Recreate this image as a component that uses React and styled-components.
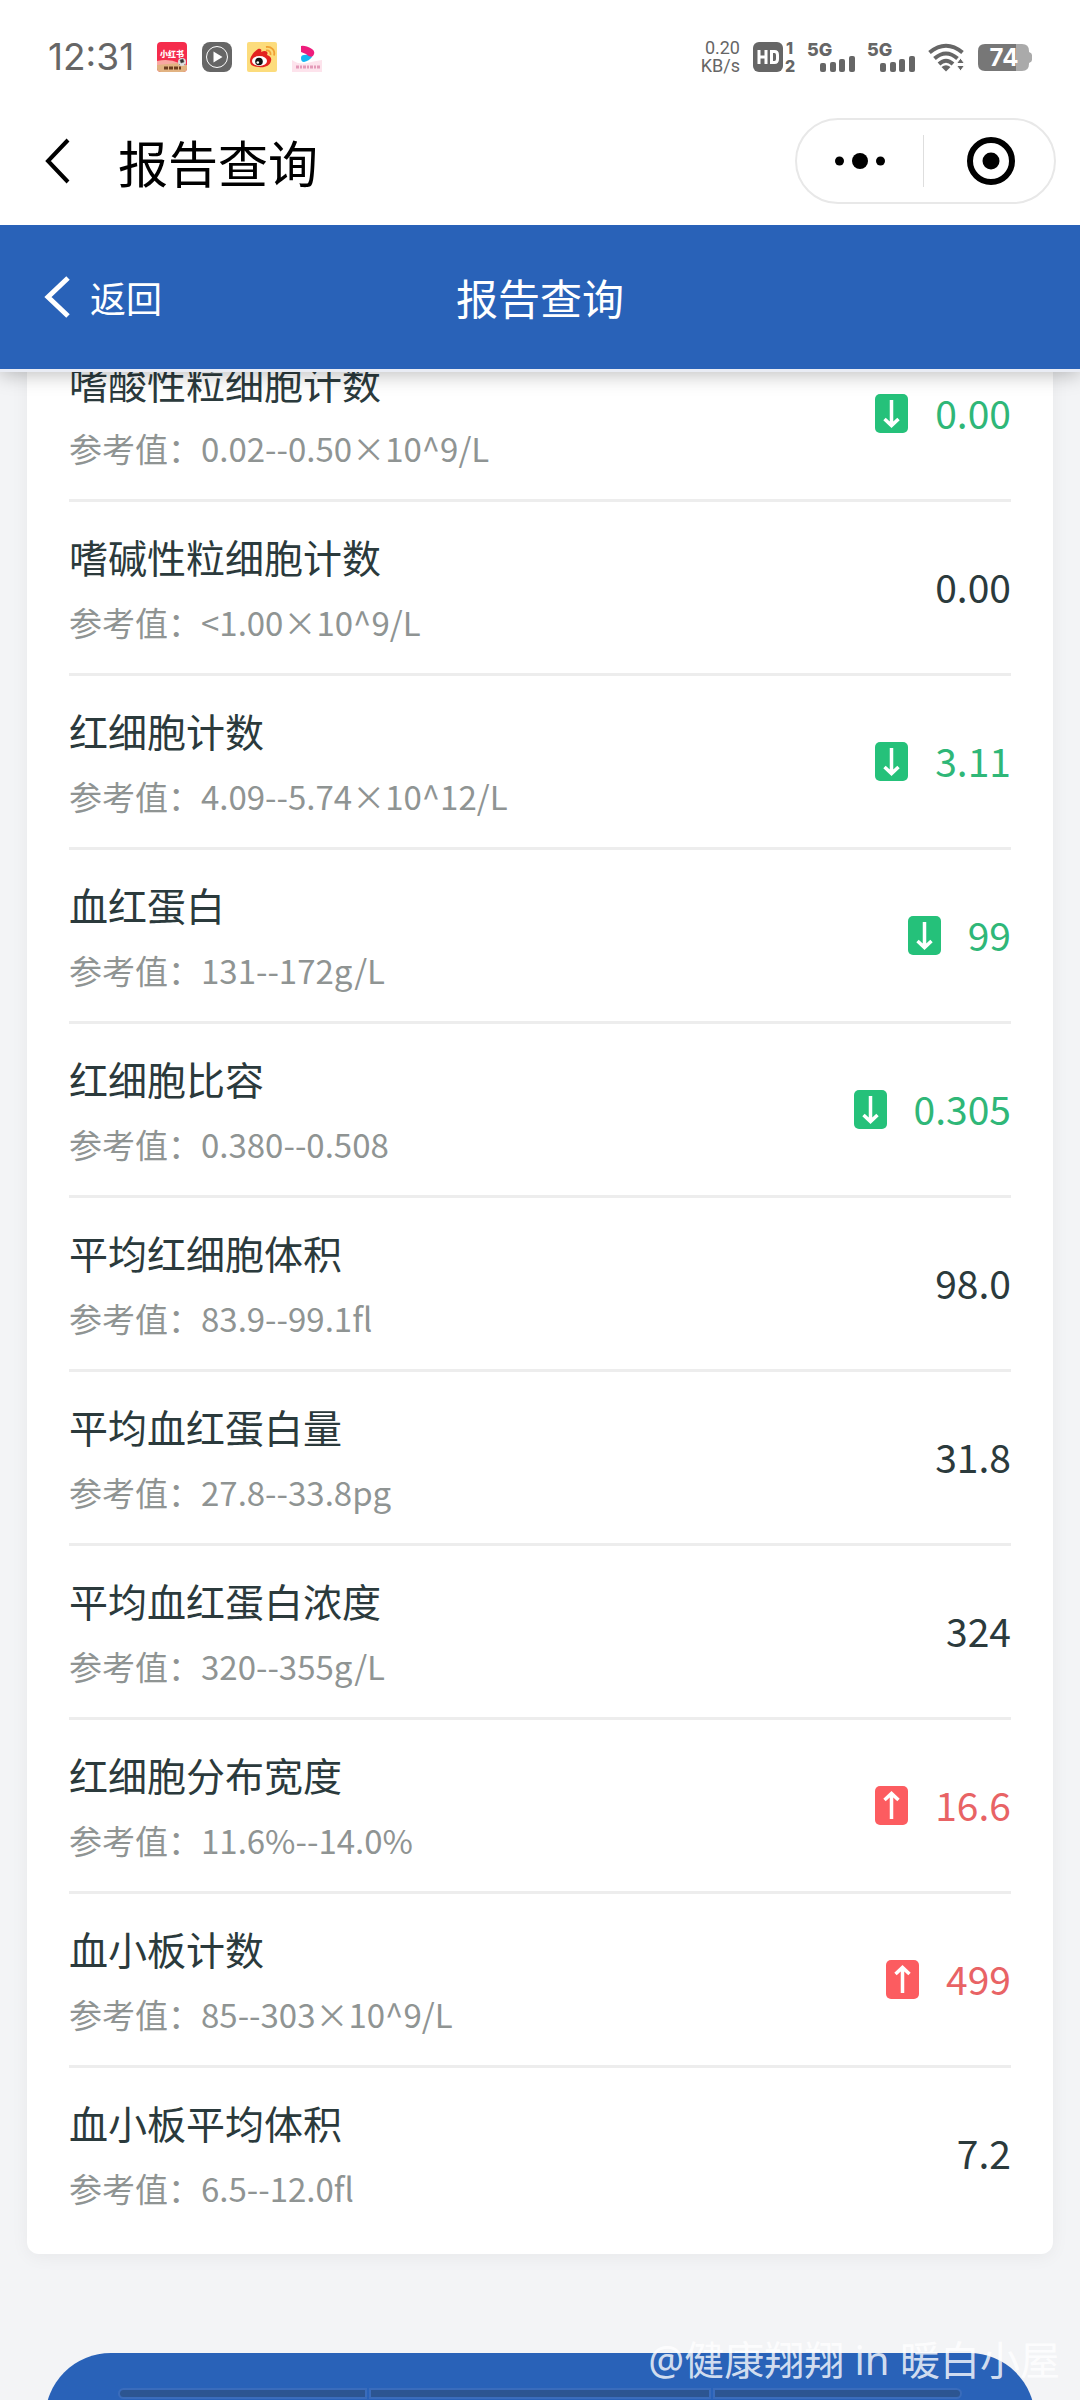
import React, { useLayoutEffect, useRef } from 'react'
import styled, { createGlobalStyle, css } from 'styled-components'

const colors = {
  primary: '#2962b8',
  page: '#f3f4f6',
  text: '#2b3a3c',
  muted: '#8f9493',
  line: '#ededed',
  status: '#666666',
  low: '#2fb778',
  lowIcon: '#25c17a',
  high: '#e86365',
  highIcon: '#fc5c60',
}

const results = [
  { name: '嗜酸性粒细胞计数', range: '0.02--0.50×10^9/L', value: '0.00', flag: 'low' },
  { name: '嗜碱性粒细胞计数', range: '<1.00×10^9/L', value: '0.00' },
  { name: '红细胞计数', range: '4.09--5.74×10^12/L', value: '3.11', flag: 'low' },
  { name: '血红蛋白', range: '131--172g/L', value: '99', flag: 'low' },
  { name: '红细胞比容', range: '0.380--0.508', value: '0.305', flag: 'low' },
  { name: '平均红细胞体积', range: '83.9--99.1fl', value: '98.0' },
  { name: '平均血红蛋白量', range: '27.8--33.8pg', value: '31.8' },
  { name: '平均血红蛋白浓度', range: '320--355g/L', value: '324' },
  { name: '红细胞分布宽度', range: '11.6%--14.0%', value: '16.6', flag: 'high' },
  { name: '血小板计数', range: '85--303×10^9/L', value: '499', flag: 'high' },
  { name: '血小板平均体积', range: '6.5--12.0fl', value: '7.2' },
]

const GlobalStyle = createGlobalStyle`
  * {
    box-sizing: border-box;
  }

  body {
    margin: 0;
    background: ${colors.page};
    font-family: 'Noto Sans CJK SC', sans-serif;
  }

  button {
    margin: 0;
    padding: 0;
    border: 0;
    background: none;
    color: inherit;
    font: inherit;
  }

  svg {
    display: block;
    flex: none;
    overflow: visible;
  }
`

const Screen = styled('div')`
  position: relative;
  display: flex;
  flex-direction: column;
  height: 100vh;
  overflow: hidden;
`

const StatusBar = styled('div')`
  display: flex;
  justify-content: space-between;
  align-items: center;
  padding: 17px 48px 0;
  height: 97px;
  background: #fff;
  color: ${colors.status};
`

const StatusGroup = styled('div')`
  display: flex;
  align-items: center;
  gap: ${p => p.$gap}px;
`

const Clock = styled('time')`
  margin-right: 8px;
  font: 400 37px/40px Inter, sans-serif;
`

const Speed = styled('div')`
  display: flex;
  flex-direction: column;
  align-items: flex-end;
  font: 400 18px/18px Roboto, sans-serif;
`

const TitleBar = styled('header')`
  position: relative;
  z-index: 2;
  display: flex;
  align-items: center;
  padding: 0 24px 0 45px;
  height: 128px;
  background: #fff;
  color: #000;
`

const PageTitle = styled('h1')`
  flex: 1;
  margin: 0 0 0 48px;
  font-size: 50px;
  font-weight: 400;
  line-height: 72px;
`

const Capsule = styled('div')`
  display: flex;
  align-items: center;
  width: 261px;
  height: 86px;
  border: 2px solid #e8e8e8;
  border-radius: 43px;
`

const CapsuleButton = styled('button')`
  display: flex;
  flex: 1;
  justify-content: center;
  align-items: center;
  height: 52px;

  & + & {
    padding-left: 4px;
    border-left: 1px solid #dedede;
  }
`

const NavBar = styled('nav')`
  position: relative;
  z-index: 1;
  display: grid;
  grid-template-columns: 1fr auto 1fr;
  align-items: center;
  padding: 0 45px;
  height: 147px;
  border-bottom: 3px solid #e9ecf4;
  background: ${colors.primary};
  box-shadow: 0 3px 18px rgba(0, 0, 0, 0.25);
  color: #fff;
`

const BackButton = styled('button')`
  display: flex;
  align-items: center;
  gap: 20px;
  font-size: 36px;
  line-height: 54px;
`

const NavTitle = styled('h2')`
  margin: 0;
  font-size: 42px;
  font-weight: 400;
  line-height: 60px;
`

const Content = styled('main')`
  flex: 1;
  min-height: 0;
  padding: 0 27px 60px;
  overflow-y: auto;
  scrollbar-width: none;
`

const Card = styled('ul')`
  margin: 0;
  padding: 0 42px 15px;
  border-radius: 12px;
  background: #fff;
  box-shadow: 0 3px 18px rgba(0, 0, 0, 0.05);
  list-style: none;
`

const Row = styled('li')`
  display: flex;
  justify-content: space-between;
  align-items: center;
  height: 174px;
  border-bottom: 3px solid ${colors.line};

  &:last-child {
    height: 171px;
    border-bottom: 0;
  }
`

const Info = styled('div')`
  display: flex;
  flex-direction: column;
  gap: 9px;
`

const Name = styled('span')`
  color: ${colors.text};
  font-size: 39px;
  line-height: 60px;
`

const Range = styled('span')`
  color: ${colors.muted};
  font-size: 33px;
  line-height: 54px;
`

const Result = styled('div')`
  display: flex;
  align-items: center;
  gap: 27px;
  color: ${colors.text};

  ${p =>
    p.$flag &&
    css`
      color: ${colors[p.$flag]};
    `}
`

const Value = styled('span')`
  padding-bottom: 4px;
  font-size: 39px;
  line-height: 60px;
`

const SubmitButton = styled('button')`
  display: block;
  width: calc(100% - 36px);
  height: 132px;
  margin: 99px 18px 0;
  border-radius: 66px;
  background: ${colors.primary};
`

const GestureBar = styled('div')`
  position: absolute;
  right: 120px;
  bottom: 3px;
  left: 120px;
  display: grid;
  grid-template-columns: 245fr 338fr 245fr;
  gap: 6px;
`

const GestureSegment = styled('span')`
  height: 7px;
  background: #2c5591;
  box-shadow: 0 0 0 2px #3a6cbb;

  &:first-child {
    border-radius: 4px 0 0 4px;
  }

  &:last-child {
    border-radius: 0 4px 4px 0;
  }
`

const Watermark = styled('div')`
  position: absolute;
  right: 20px;
  bottom: 10px;
  color: rgba(255, 255, 255, 0.8);
  font-family: 'Noto Sans', 'Noto Sans CJK SC', sans-serif;
  font-size: 40px;
  line-height: 60px;
`

const BackIcon = ({ height, stroke }) => (
  <svg width="25" height={height} viewBox={`0 0 25 ${height}`} fill="none" stroke="currentColor" strokeWidth={stroke}>
    <path d={`M23 2L3 ${height / 2}L23 ${height - 2}`} />
  </svg>
)

const RedNoteIcon = () => (
  <svg width="30" height="30" viewBox="0 0 30 30">
    <rect width="30" height="30" rx="4" fill="#f52c4c" />
    <path d="M0 20L10 19L30 23V26A4 4 0 0 1 26 30H4A4 4 0 0 1 0 26Z" fill="#e2b382" />
    <path d="M0 19Q12 16 22 21L0 23Z" fill="#f9a8a2" />
    <circle cx="25" cy="20" r="4" fill="#ddd" />
    <path d="M23 18l3-1 1 3-3 1zM22 22l1 1M27 23l1-1" fill="#333" stroke="#555" strokeWidth="0.5" />
    <path d="M7 26H24" stroke="#6b3d1e" strokeWidth="3" strokeDasharray="4 1" />
    <text x="15" y="15" fill="#fff" fontSize="8" fontWeight="900" textAnchor="middle">
      小红书
    </text>
  </svg>
)

const PlayIcon = () => (
  <svg width="30" height="30" viewBox="0 0 30 30">
    <rect width="30" height="30" rx="8" fill={colors.status} />
    <circle cx="15" cy="15" r="10.5" fill="none" stroke="#fff" />
    <path d="M11.5 9.5L20.5 15L11.5 20.5Z" fill="#fff" />
  </svg>
)

const WeiboIcon = () => (
  <svg width="30" height="30" viewBox="0 0 30 30">
    <rect width="30" height="30" rx="2" fill="#fcdc7c" />
    <path
      d="M3 19C3 14 8 9 11 7C14 6 15 8 14 10C18 8 22 9 20 13C23 14 25 16 24 19C23 24 17 26 12 25C6 25 3 23 3 19Z"
      fill="#e3211f"
    />
    <ellipse cx="12.5" cy="19" rx="7.5" ry="5" fill="#fff" />
    <circle cx="12" cy="19.5" r="3.8" fill="#111" />
    <circle cx="10.8" cy="20.5" r="1.3" fill="#fff" />
    <path d="M19 8.5C22 8 24 10 23.5 13M19 5C24 4 28.5 8 27 13.5" fill="none" stroke="#f0a033" strokeWidth="1.8" />
  </svg>
)

const VideoIcon = () => (
  <svg width="30" height="30" viewBox="0 0 30 30">
    <path d="M0 18Q7 23 15 21T30 18V30H0Z" fill="#fde3ec" />
    <path d="M9 16Q9 13 12 13L19 12L20 15Q17 19 12 20Q9 20 9 16Z" fill="#17b6f2" />
    <path d="M9 4Q13 3 20 7Q24 10 21 14Q18 16 14 12L9 10Z" fill="#ee1d7c" />
    <path d="M4 25H28" stroke="#e39ab8" strokeWidth="3" strokeDasharray="3 1 2 1" />
  </svg>
)

const HdIcon = () => (
  <svg width="42" height="30" viewBox="0 0 42 30" fill={colors.status} fontFamily="Inter, sans-serif" fontWeight="800">
    <rect width="30" height="30" rx="6" />
    <path
      d="M6 8V22M13 8V22M6 15H13M18.5 9.5H21.5Q24.5 9.5 24.5 13V17Q24.5 20.5 21.5 20.5H18.5Z"
      fill="none"
      stroke="#fff"
      strokeWidth="3"
    />
    <text x="33" y="12" fontSize="16">1</text>
    <text x="32" y="30" fontSize="16">2</text>
  </svg>
)

const SignalIcon = () => (
  <svg width="47" height="30" viewBox="0 0 47 30" fill={colors.status}>
    <text x="-1" y="14" fontFamily="Inter, sans-serif" fontSize="18" fontWeight="800">
      5G
    </text>
    <rect x="12" y="21" width="6" height="9" rx="2" />
    <rect x="22" y="20" width="6" height="10" rx="2" />
    <rect x="31" y="17" width="6" height="13" rx="2" />
    <rect x="41" y="14" width="6" height="16" rx="2" />
  </svg>
)

const WifiIcon = () => (
  <svg width="37" height="30" viewBox="0 0 37 30" fill="none" stroke={colors.status} strokeWidth="4">
    <path d="M1.5 10.5Q18 -3 34.5 10.5M6.5 16.5Q18 6.5 29.500 16.5M11 22Q18 15.5 25 22" />
    <path d="M13.5 25Q18 21.5 22.5 25L18 29.5Z" fill={colors.status} stroke="none" />
    <path d="M32.5 16L36.5 21.5H28.5ZM28.5 23.5H36.5L32.5 29Z" fill={colors.status} stroke="#fff" strokeWidth="1" />
  </svg>
)

const BatteryIcon = () => (
  <svg width="54" height="27" viewBox="0 0 54 27">
    <path d="M38 0H44Q51 0 51 7V8Q54 9 54 11V16Q54 18 51 19V20Q51 27 44 27H38Z" fill="#aaa" />
    <path d="M7 0H38V27H7Q0 27 0 20V7Q0 0 7 0Z" fill="#777" />
    <text x="26" y="22" fill="#fff" fontFamily="Inter, sans-serif" fontSize="24" fontWeight="700" textAnchor="middle">
      74
    </text>
  </svg>
)

const MoreIcon = () => (
  <svg width="52" height="16" viewBox="0 0 52 16">
    <circle cx="5.5" cy="8" r="4.5" />
    <circle cx="26" cy="8" r="8" />
    <circle cx="46.5" cy="8" r="4.5" />
  </svg>
)

const CloseIcon = () => (
  <svg width="48" height="48" viewBox="0 0 48 48">
    <circle cx="24" cy="24" r="21" fill="none" stroke="#000" strokeWidth="6" />
    <circle cx="24" cy="24" r="8.5" />
  </svg>
)

const FlagIcon = ({ flag }) => (
  <svg width="33" height="39" viewBox="0 0 33 39" role="img" aria-label={flag === 'low' ? '偏低' : '偏高'}>
    <rect width="33" height="39" rx="5" fill={colors[`${flag}Icon`]} />
    <path
      d={flag === 'low' ? 'M16.5 6V31M9.5 25L16.5 31.5L23.5 25' : 'M16.5 33V8M9.5 14L16.5 7.5L23.5 14'}
      fill="none"
      stroke="#fff"
      strokeWidth="3.5"
    />
  </svg>
)

const App = () => {
  const content = useRef(null)

  // open the report with the first visible row tucked under the nav bar
  useLayoutEffect(() => {
    content.current.scrollTop = 44
  }, [])

  return (
    <Screen>
      <GlobalStyle />

      <StatusBar>
        <StatusGroup $gap={15}>
          <Clock>12:31</Clock>
          <RedNoteIcon />
          <PlayIcon />
          <WeiboIcon />
          <VideoIcon />
        </StatusGroup>
        <StatusGroup $gap={13}>
          <Speed>
            <span>0.20</span>
            <span>KB/s</span>
          </Speed>
          <HdIcon />
          <SignalIcon />
          <SignalIcon />
          <WifiIcon />
          <BatteryIcon />
        </StatusGroup>
      </StatusBar>

      <TitleBar>
        <button type="button" aria-label="返回">
          <BackIcon height={46} stroke={4} />
        </button>
        <PageTitle>报告查询</PageTitle>
        <Capsule>
          <CapsuleButton type="button" aria-label="更多">
            <MoreIcon />
          </CapsuleButton>
          <CapsuleButton type="button" aria-label="关闭">
            <CloseIcon />
          </CapsuleButton>
        </Capsule>
      </TitleBar>

      <NavBar>
        <BackButton type="button">
          <BackIcon height={42} stroke={5} />
          返回
        </BackButton>
        <NavTitle>报告查询</NavTitle>
      </NavBar>

      <Content ref={content}>
        <Card>
          {results.map(item => (
            <Row key={item.name}>
              <Info>
                <Name>{item.name}</Name>
                <Range>参考值：{item.range}</Range>
              </Info>
              <Result $flag={item.flag}>
                {item.flag && <FlagIcon flag={item.flag} />}
                <Value>{item.value}</Value>
              </Result>
            </Row>
          ))}
        </Card>
        <SubmitButton type="button" aria-label="提交" />
      </Content>

      <GestureBar>
        <GestureSegment />
        <GestureSegment />
        <GestureSegment />
      </GestureBar>
      <Watermark>@健康翔翔 in 暖白小屋</Watermark>
    </Screen>
  )
}

export default App
